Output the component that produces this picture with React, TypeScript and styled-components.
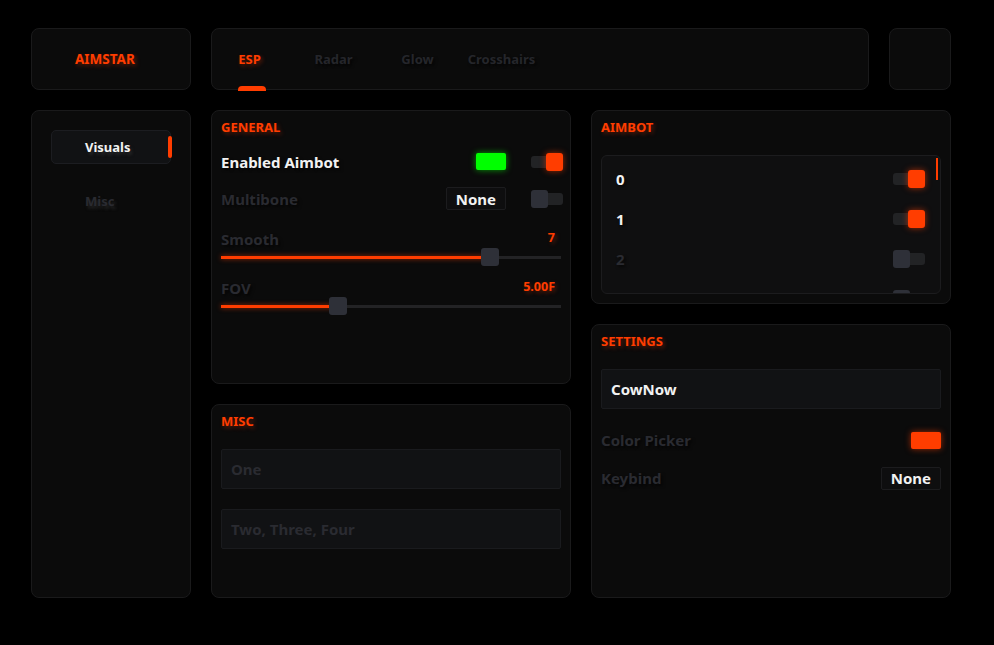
import React from 'react';
import styled, {createGlobalStyle} from 'styled-components';

const ORANGE = '#ff3d00';
const DIM = '#2a2b31';

const Global = createGlobalStyle`
  html, body {
    margin: 0;
    background: #000;
  }
  body {
    font-family: "Noto Sans", "Open Sans", sans-serif;
    font-weight: 700;
  }
`;

const Page = styled.div`
  display: flex;
  flex-direction: column;
  gap: 20px;
  padding: 28px 0 0 31px;
  width: 920px;
`;

const Header = styled.div`
  display: grid;
  grid-template-columns: 160px 658px 62px;
  gap: 20px;
  height: 62px;
`;

const Card = styled.div`
  position: relative;
  box-sizing: border-box;
  background: #0b0b0b;
  border: 1px solid #1a1a1b;
  border-radius: 8px;
`;

const LogoCard = styled(Card)`
  display: flex;
  align-items: center;
  padding-left: 43px;
`;

const Logo = styled.span`
  color: ${ORANGE};
  font-size: 13.5px;
  line-height: 16px;
  text-shadow: 2px 2px 4px rgba(255, 61, 0, 0.35);
`;

const TabsCard = styled(Card)`
  display: grid;
  grid-template-columns: repeat(4, 84px);
  align-items: center;
`;

const Tab = styled.div<{ $active?: boolean }>`
  display: flex;
  justify-content: center;
  margin-left: -9px;
  font-size: 13px;
  line-height: 16px;
  color: ${p => (p.$active ? ORANGE : '#25262b')};
  text-shadow: ${p => (p.$active ? '2px 2px 4px rgba(255, 61, 0, 0.35)' : '2px 2px 3px rgba(0,0,0,0.6)')};
`;

const TabLabel = styled.span`
  position: relative;
`;

const TabLine = styled.span`
  position: absolute;
  left: 0;
  top: 35px;
  width: 28px;
  height: 5px;
  background: ${ORANGE};
  border-radius: 4px 4px 0 0;
`;

const Main = styled.div`
  display: grid;
  grid-template-columns: 160px 360px 360px;
  gap: 20px;
`;

const Column = styled.div`
  display: flex;
  flex-direction: column;
  gap: 20px;
`;

const Sidebar = styled(Card)`
  height: 488px;
  padding: 19px;
  display: flex;
  flex-direction: column;
  gap: 20px;
`;

const NavItem = styled.div<{ $active?: boolean }>`
  position: relative;
  box-sizing: border-box;
  width: 120px;
  height: 34px;
  padding-left: 33px;
  display: flex;
  align-items: center;
  font-size: 13px;
  border-radius: 5px;
  background: ${p => (p.$active ? '#111214' : 'transparent')};
  border: 1px solid ${p => (p.$active ? '#1c1d21' : 'transparent')};
  color: ${p => (p.$active ? '#f2f2f2' : DIM)};
  text-shadow: 2px 3px 3px rgba(60, 60, 60, 0.5);
`;

const NavMark = styled.span`
  position: absolute;
  right: -2px;
  top: 5px;
  width: 4px;
  height: 22px;
  border-radius: 2px;
  background: ${ORANGE};
`;

const Panel = styled(Card)<{ $h: number }>`
  height: ${p => p.$h}px;
  padding: 8px 9px;
  display: flex;
  flex-direction: column;
`;

const Title = styled.div<{ $gap: number }>`
  color: ${ORANGE};
  font-size: 13px;
  line-height: 16px;
  margin-bottom: ${p => p.$gap}px;
  text-shadow: 2px 2px 4px rgba(255, 61, 0, 0.35);
`;

const Row = styled.div<{ $h?: number }>`
  height: ${p => p.$h || 37}px;
  display: flex;
  align-items: center;
  justify-content: space-between;
`;

const Label = styled.span<{ $on?: boolean }>`
  font-size: 15px;
  line-height: 18px;
  color: ${p => (p.$on ? '#f2f2f2' : DIM)};
  text-shadow: 2px 2px 3px rgba(0, 0, 0, 0.6);
`;

const Controls = styled.div<{ $shift?: number }>`
  display: flex;
  align-items: center;
  gap: 25px;
  margin-right: ${p => p.$shift || 0}px;
`;

const Swatch = styled.div<{ $color: string }>`
  width: 30px;
  height: 17px;
  border-radius: 2px;
  background: ${p => p.$color};
  box-shadow: 0 0 6px ${p => p.$color}99;
`;

const Combo = styled.div`
  box-sizing: border-box;
  height: 23px;
  padding: 0 9px;
  display: flex;
  align-items: center;
  background: #0e0e0f;
  border: 1px solid #1c1c1e;
  border-radius: 2px;
  color: #f2f2f2;
  font-size: 15px;
`;

const Track = styled.div`
  position: relative;
  width: 32px;
  height: 18px;
  &::before {
    content: '';
    position: absolute;
    left: 0;
    right: 0;
    top: 3px;
    height: 12px;
    border-radius: 3px;
    background: #222325;
  }
`;

const Knob = styled.span<{ $on: boolean }>`
  position: absolute;
  top: 0;
  ${p => (p.$on ? 'right: 0;' : 'left: 0;')}
  width: 17px;
  height: 18px;
  border-radius: 3px;
  background: ${p => (p.$on ? ORANGE : '#2e3038')};
  box-shadow: ${p => (p.$on ? '0 0 6px rgba(255, 61, 0, 0.6)' : 'none')};
`;

const Toggle = ({on}: { on: boolean }) => (
  <Track>
    <Knob $on={on}/>
  </Track>
);

const SliderBlock = styled.div`
  margin-top: 13px;
  display: flex;
  flex-direction: column;
`;

const SliderHead = styled.div`
  height: 18px;
  display: flex;
  align-items: center;
  justify-content: space-between;
  padding-right: 6px;
`;

const Value = styled.span`
  color: ${ORANGE};
  font-size: 12.5px;
  margin-top: -4px;
  text-shadow: 2px 2px 4px rgba(255, 61, 0, 0.35);
`;

const Rail = styled.div`
  position: relative;
  height: 18px;
  &::before {
    content: '';
    position: absolute;
    left: 0;
    right: 0;
    top: 8px;
    height: 3px;
    background: #232325;
  }
`;

const Fill = styled.div`
  position: absolute;
  left: 0;
  top: 8px;
  height: 3px;
  background: ${ORANGE};
  box-shadow: 0 0 5px rgba(255, 61, 0, 0.6);
`;

const Thumb = styled.div`
  position: absolute;
  top: 0;
  width: 18px;
  height: 18px;
  margin-left: -9px;
  border-radius: 3px;
  background: #2e3038;
`;

const Slider = ({label, value, pct}: { label: string, value: string, pct: number }) => (
  <SliderBlock>
    <SliderHead>
      <Label>{label}</Label>
      <Value>{value}</Value>
    </SliderHead>
    <Rail>
      <Fill style={{width: `${pct}%`}}/>
      <Thumb style={{left: `${pct}%`}}/>
    </Rail>
  </SliderBlock>
);

const Input = styled.div<{ $filled?: boolean }>`
  box-sizing: border-box;
  height: 40px;
  padding: 0 9px;
  display: flex;
  align-items: center;
  background: #111214;
  border: 1px solid #1a1b1e;
  border-radius: 2px;
  font-size: 15px;
  color: ${p => (p.$filled ? '#f2f2f2' : DIM)};
  & + & {
    margin-top: 20px;
  }
`;

const List = styled.div`
  position: relative;
  box-sizing: border-box;
  height: 139px;
  padding: 3px 15px 0 14px;
  overflow: hidden;
  background: #0f0f10;
  border: 1px solid #1c1c1e;
  border-radius: 6px;
`;

const ListRow = styled.div`
  height: 40px;
  display: flex;
  align-items: center;
  justify-content: space-between;
`;

const ScrollBar = styled.span`
  position: absolute;
  right: 2px;
  top: 2px;
  width: 2px;
  height: 22px;
  background: ${ORANGE};
`;

const bones = [true, true, false, false];

export default function App() {
  return (
    <>
      <Global/>
      <Page>
        <Header>
          <LogoCard><Logo>AIMSTAR</Logo></LogoCard>
          <TabsCard>
            <Tab $active><TabLabel>ESP<TabLine/></TabLabel></Tab>
            <Tab>Radar</Tab>
            <Tab>Glow</Tab>
            <Tab>Crosshairs</Tab>
          </TabsCard>
          <Card/>
        </Header>
        <Main>
          <Sidebar>
            <NavItem $active>Visuals<NavMark/></NavItem>
            <NavItem>Misc</NavItem>
          </Sidebar>
          <Column>
            <Panel $h={274}>
              <Title $gap={8}>GENERAL</Title>
              <Row>
                <Label $on>Enabled Aimbot</Label>
                <Controls $shift={-2}>
                  <Swatch $color="#00ff00"/>
                  <Toggle on/>
                </Controls>
              </Row>
              <Row>
                <Label>Multibone</Label>
                <Controls $shift={-2}>
                  <Combo>None</Combo>
                  <Toggle on={false}/>
                </Controls>
              </Row>
              <Slider label="Smooth" value="7" pct={79}/>
              <Slider label="FOV" value="5.00F" pct={34.4}/>
            </Panel>
            <Panel $h={194}>
              <Title $gap={20}>MISC</Title>
              <Input>One</Input>
              <Input>Two, Three, Four</Input>
            </Panel>
          </Column>
          <Column>
            <Panel $h={194}>
              <Title $gap={20}>AIMBOT</Title>
              <List>
                {bones.map((on, i) => (
                  <ListRow key={i}>
                    <Label $on={on}>{i}</Label>
                    <Toggle on={on}/>
                  </ListRow>
                ))}
                <ScrollBar/>
              </List>
            </Panel>
            <Panel $h={274}>
              <Title $gap={20}>SETTINGS</Title>
              <Input $filled>CowNow</Input>
              <Row $h={12}/>
              <Row $h={38}>
                <Label>Color Picker</Label>
                <Swatch $color={ORANGE}/>
              </Row>
              <Row $h={38}>
                <Label>Keybind</Label>
                <Combo>None</Combo>
              </Row>
            </Panel>
          </Column>
        </Main>
      </Page>
    </>
  );
}
